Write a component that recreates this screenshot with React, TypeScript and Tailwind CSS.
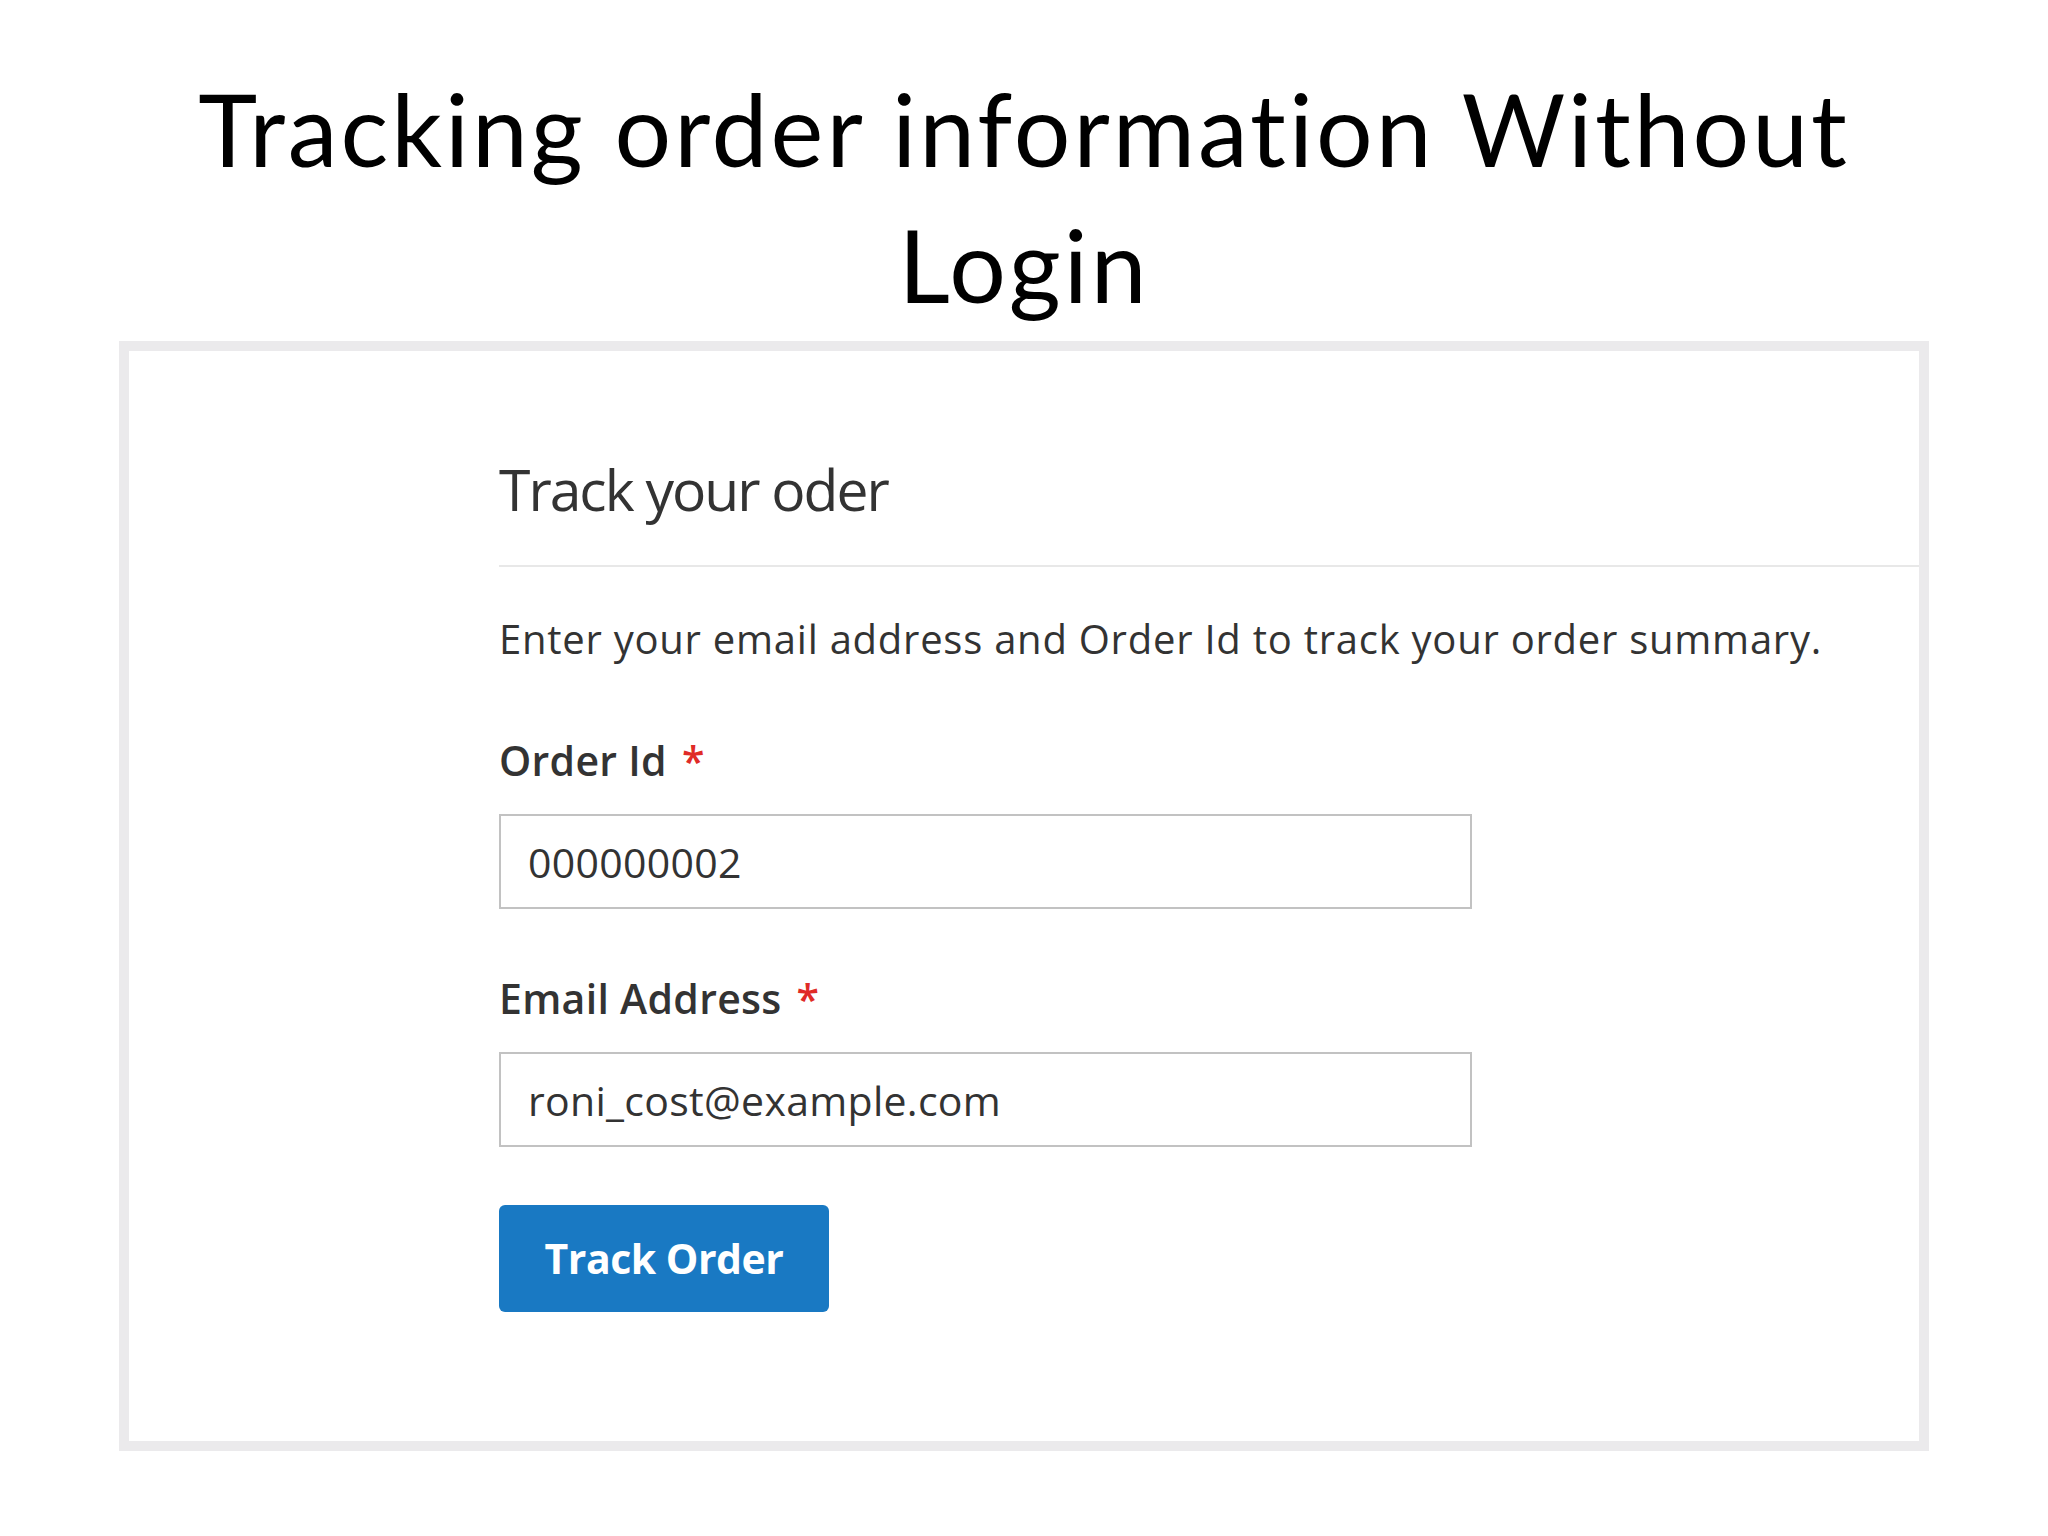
import React from 'react'

const FIELDS = [
  { id: 'order-id', label: 'Order Id', value: '000000002', gap: 'mt-[81px]' },
  { id: 'email', label: 'Email Address', value: 'roni_cost@example.com', gap: 'mt-[69px]' },
]

export default function App() {
  return (
    <div className="min-h-screen w-[2048px] bg-white">
      {/* SLIDE TITLE */}
      <h1 className="pt-[60px] text-center font-['Lato',sans-serif] text-[100px] leading-[136px] font-normal tracking-[3px] text-black">
        Tracking order information Without
        <br />
        Login
      </h1>

      {/* SCREENSHOT FRAME */}
      <div className="mx-auto mt-[9px] h-[1110px] w-[1810px] border-[10px] border-[#ebeaec] bg-white">
        <div className="pl-[370px] pt-[110px] font-['Open_Sans',sans-serif] text-[#333333]">
          <h2 className="text-[57px] leading-none font-normal tracking-[-2px]">Track your oder</h2>
          <div className="mt-[47px] h-[2px] bg-[#e8e8e8]" />

          <p className="mt-[52px] text-[40px] leading-none tracking-[0.75px]">
            Enter your email address and Order Id to track your order summary.
          </p>

          {FIELDS.map((f) => (
            <div key={f.id} className={f.gap}>
              <label htmlFor={f.id} className="block text-[41px] leading-none font-semibold tracking-[0.3px]">
                {f.label}
                <span className="ml-[15px] text-[#e02b27]">*</span>
              </label>
              <input
                id={f.id}
                readOnly
                defaultValue={f.value}
                className="mt-[33px] block h-[95px] w-[973px] border-2 border-[#c2c2c2] bg-white pl-[27px] text-[41px] tracking-[0.3px] text-[#333333] outline-none"
              />
            </div>
          ))}

          <button className="mt-[58px] flex h-[107px] w-[330px] items-center justify-center rounded-[6px] bg-[#1979c3] text-[41px] font-bold tracking-[-0.5px] text-white">
            Track Order
          </button>
        </div>
      </div>
    </div>
  )
}
